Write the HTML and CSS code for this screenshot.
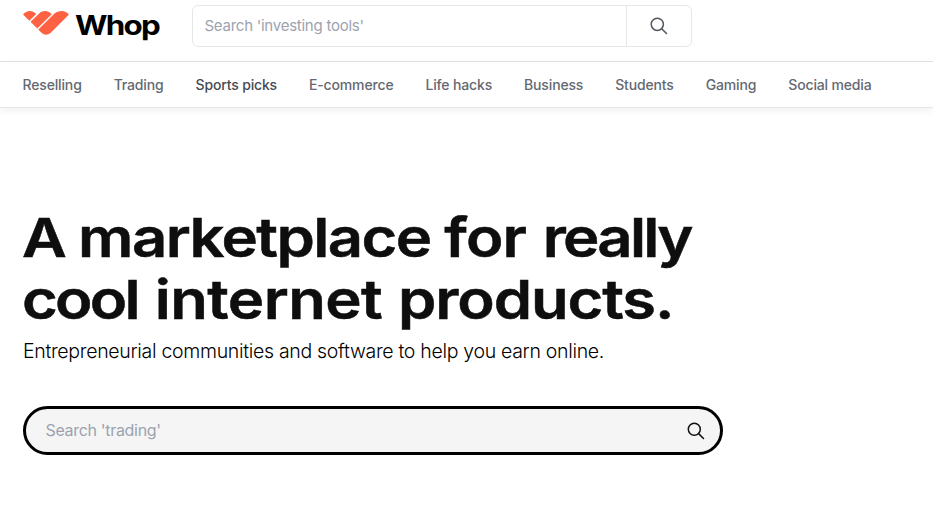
FILE: index.html
```html
<!DOCTYPE html>
<html lang="en">
<head>
<meta charset="utf-8">
<title>Whop</title>
<link rel="stylesheet" href="styles.css">
</head>
<body>
<header class="topbar">
  <a class="logo">
    <svg class="logo-mark" width="46" height="24" viewBox="0 0 46 24"><path d="M0 3.600C3.500-.8 9.400-1.200 13.200 3L6.400 9.800ZM7.500 10.800 16.200 2.400C19.800-.8 25-.8 28.800 3.200L14.300 17.400ZM15.300 18.400 31.500 2.600C35.500-.9 42-1 46 3.500L27.500 22Q22.800 25.700 18.200 21.500Z"/></svg>
    <span class="logo-name">Whop</span>
  </a>
  <div class="search">
    <span class="search-text">Search 'investing tools'</span>
    <span class="search-button"><svg class="icon" width="18" height="18" viewBox="0 0 18 18"><circle cx="7.300" cy="7.300" r="6.100"/><path d="M11.700 11.700 16.500 16.500"/></svg></span>
  </div>
</header>
<nav class="nav">
  <a>Reselling</a><a>Trading</a><a class="active">Sports picks</a><a>E-commerce</a><a>Life hacks</a><a>Business</a><a>Students</a><a>Gaming</a><a>Social media</a>
</nav>
<main class="hero">
  <h1 class="title"><span class="line">A <span class="w-marketplace">marketplace</span> <span class="w-for">for</span> <span class="w-really">really</span></span><span class="line"><span class="w-cool">cool</span> <span class="w-internet">internet</span> <span class="w-products">products.</span></span></h1>
  <p class="subtitle">Entrepreneurial communities and software to help you earn online.</p>
  <div class="hero-search">
    <span class="hero-search-text">Search 'trading'</span>
    <svg class="icon icon-dark" width="18" height="18" viewBox="0 0 18 18"><circle cx="7.300" cy="7.300" r="6"/><path d="M11.600 11.600 16.500 16.500"/></svg>
  </div>
</main>
</body>
</html>
```
FILE: styles.css
```css
* { box-sizing: border-box; }
body { margin: 0; height: 511px; overflow: hidden; background: #fff; font-family: Inter, sans-serif; color: #000; }
.topbar { display: flex; height: 62px; padding: 5px 0 0 23px; border-bottom: 1px solid #e5e5e5; }
.logo { display: flex; width: 169px; padding-top: 6px; }
.logo-mark { fill: #ff6243; flex: none; }
.logo-name { margin: -2px 0 0 6px; font-size: 27px; line-height: 34px; font-weight: 700; letter-spacing: -1.5px; transform: scaleX(1.16); transform-origin: left; }
.search { display: flex; width: 500px; height: 42px; border: 1px solid #e5e7eb; border-radius: 6px; }
.search-text { flex: 1; padding-left: 11.5px; font-size: 15px; line-height: 40px; letter-spacing: -.25px; color: #9ca3af; }
.search-button { display: flex; width: 65px; align-items: center; justify-content: center; border-left: 1px solid #e5e7eb; }
.icon { fill: none; stroke: #52565f; stroke-width: 1.5; stroke-linecap: round; }
.icon-dark { stroke: #111; }
.nav { display: flex; gap: 32px; height: 46px; padding-left: 22.5px; border-bottom: 1px solid #e5e7eb; box-shadow: 0 2px 8px rgba(0,0,0,.07); font-size: 14px; line-height: 46px; font-weight: 500; letter-spacing: -.155px; color: #646871; white-space: nowrap; }
.nav .active { color: #474a51; }
.hero { padding: 99px 0 0 23px; }
.title { margin: 0 0 0 -1px; font-size: 54px; line-height: 62px; font-weight: 600; color: #0e0e0e; white-space: nowrap; -webkit-text-stroke: .5px #0e0e0e; }
.line { display: block; width: max-content; transform: scaleX(1.14); transform-origin: left; }
.w-marketplace { margin-left: -3.7px; letter-spacing: -1.4px; }
.w-for { margin-left: -1.7px; letter-spacing: -.7px; }
.w-really { margin-left: .8px; letter-spacing: -2.4px; }
.w-cool { letter-spacing: -2.4px; }
.w-internet { margin-left: 1px; letter-spacing: -.5px; }
.w-products { margin-left: .3px; letter-spacing: -1px; }
.subtitle { margin: 6px 0 0; font-size: 19.5px; line-height: 28px; font-weight: 300; letter-spacing: -.31px; white-space: nowrap; }
.hero-search { display: flex; align-items: center; justify-content: space-between; width: 700px; height: 49px; margin-top: 41px; padding: 0 15px 0 19.5px; border: 3px solid #000; border-radius: 25px; background: #f5f5f5; font-size: 16px; color: #9ca3af; }
.hero-search-text { letter-spacing: -.32px; padding-bottom: 2px; }
```
